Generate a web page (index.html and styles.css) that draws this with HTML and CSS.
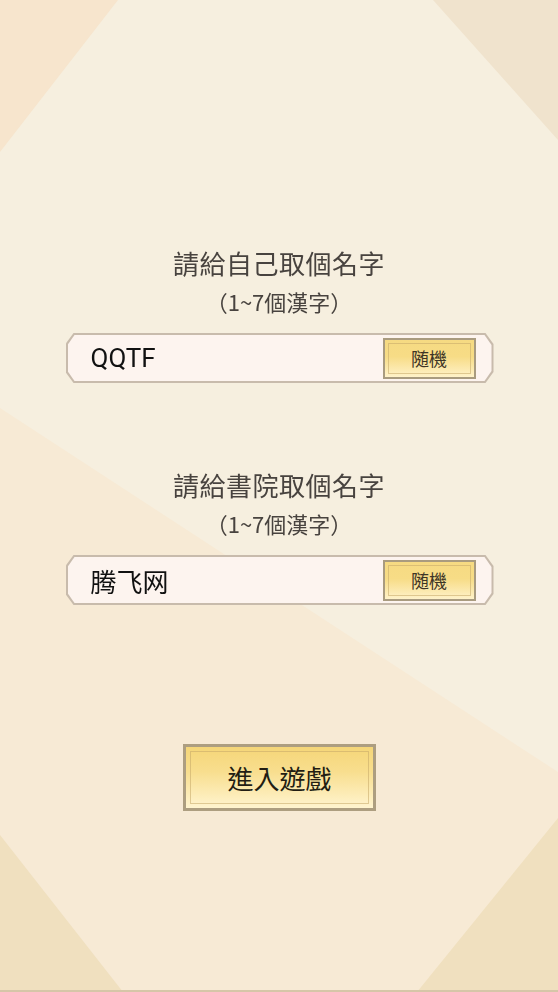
FILE: index.html
```html
<!DOCTYPE html>
<html>
	<head>
		<title>取個名字</title>
		<link rel="stylesheet" href="styles.css">
	</head>
	<body>
		<svg class="backdrop" viewBox="0 0 558 992" preserveAspectRatio="none">
			<rect width="558" height="992" fill="#f6efdf" />
			<polygon points="0,408 558,772 558,992 0,992" fill="#f7ead5" />
			<polygon points="0,0 118,0 0,152" fill="#f7e5cd" />
			<polygon points="433,0 558,0 558,140" fill="#f0e3cd" />
			<polygon points="0,835 123,992 0,992" fill="#f0e0bf" />
			<polygon points="558,818 558,992 417,992" fill="#f0e0bf" />
			<rect y="990" width="558" height="2" fill="#d6c6a8" />
		</svg>

		<div class="container">
			<div class="name-section">
				<h2 class="prompt">請給自己取個名字</h2>
				<p class="hint">（1~7個漢字）</p>
				<div class="name-box">
					<div class="name-inner">
						<input type="text" class="name-input" value="QQTF" />
						<button type="button" class="random-btn">随機</button>
					</div>
				</div>
			</div>

			<div class="name-section">
				<h2 class="prompt">請給書院取個名字</h2>
				<p class="hint">（1~7個漢字）</p>
				<div class="name-box">
					<div class="name-inner">
						<input type="text" class="name-input" value="腾飞网" />
						<button type="button" class="random-btn">随機</button>
					</div>
				</div>
			</div>

			<button type="button" class="enter-btn">進入遊戲</button>
		</div>
	</body>
</html>
```

FILE: styles.css
```css
body {
	font-family: "Noto Sans CJK TC", "Noto Sans", sans-serif;
	margin: 0;
	padding: 0;
	height: 100vh;
	overflow: hidden;
}

.backdrop {
	position: fixed;
	top: 0;
	left: 0;
	width: 100%;
	height: 100%;
	z-index: -1;
}

.container {
	display: flex;
	flex-direction: column;
	align-items: center;
	padding-top: 245px;
}

.name-section {
	display: flex;
	flex-direction: column;
	align-items: center;
	margin-bottom: 84px;
}

.name-section + .name-section {
	margin-bottom: 139px;
}

.prompt {
	margin: 0;
	font-size: 26px;
	font-weight: normal;
	line-height: 36px;
	letter-spacing: 0.5px;
	color: #48433f;
}

.hint {
	margin: 6px 0 18px;
	font-size: 22px;
	line-height: 28px;
	color: #48433f;
}

.name-box {
	width: 428px;
	height: 50px;
	padding: 2px;
	box-sizing: border-box;
	margin-left: 1px;
	background-color: #c8bbac;
	clip-path: polygon(8px 0, calc(100% - 8px) 0, 100% 11px, 100% calc(100% - 11px), calc(100% - 8px) 100%, 8px 100%, 0 calc(100% - 11px), 0 11px);
}

.name-inner {
	height: 100%;
	display: flex;
	align-items: center;
	justify-content: space-between;
	padding: 0 16px 0 23px;
	background-color: #fdf4ef;
	clip-path: polygon(7px 0, calc(100% - 7px) 0, 100% 10px, 100% calc(100% - 10px), calc(100% - 7px) 100%, 7px 100%, 0 calc(100% - 10px), 0 10px);
}

.name-input {
	flex: 1;
	min-width: 0;
	border: none;
	outline: none;
	background: transparent;
	padding: 0;
	font-family: "Roboto", "Noto Sans CJK SC", sans-serif;
	font-size: 26px;
	color: #111;
}

.random-btn {
	position: relative;
	width: 93px;
	height: 41px;
	margin-top: 1px;
	border: 2px solid #a99b7f;
	background: linear-gradient(to bottom, #f6da82 0%, #f7dc86 45%, #fff2c9 100%);
	font-family: "Noto Sans CJK TC", sans-serif;
	font-size: 18px;
	line-height: 1;
	color: #3d3526;
	cursor: pointer;
	padding: 0 0 2px;
}

.random-btn::after,
.enter-btn::after {
	content: "";
	position: absolute;
	top: 3px;
	left: 3px;
	right: 3px;
	bottom: 3px;
	border: 1px solid rgba(196, 168, 104, 0.55);
	pointer-events: none;
}

.enter-btn {
	position: relative;
	width: 193px;
	height: 67px;
	margin-left: 1px;
	border: 3px solid #ad9e80;
	background: linear-gradient(to bottom, #f5d678 0%, #f8de8e 40%, #fff4cf 100%);
	font-family: "Noto Sans CJK TC", sans-serif;
	font-size: 26px;
	color: #221d13;
	cursor: pointer;
	padding: 0;
}

.enter-btn::after {
	top: 4px;
	left: 4px;
	right: 4px;
	bottom: 4px;
}
```
